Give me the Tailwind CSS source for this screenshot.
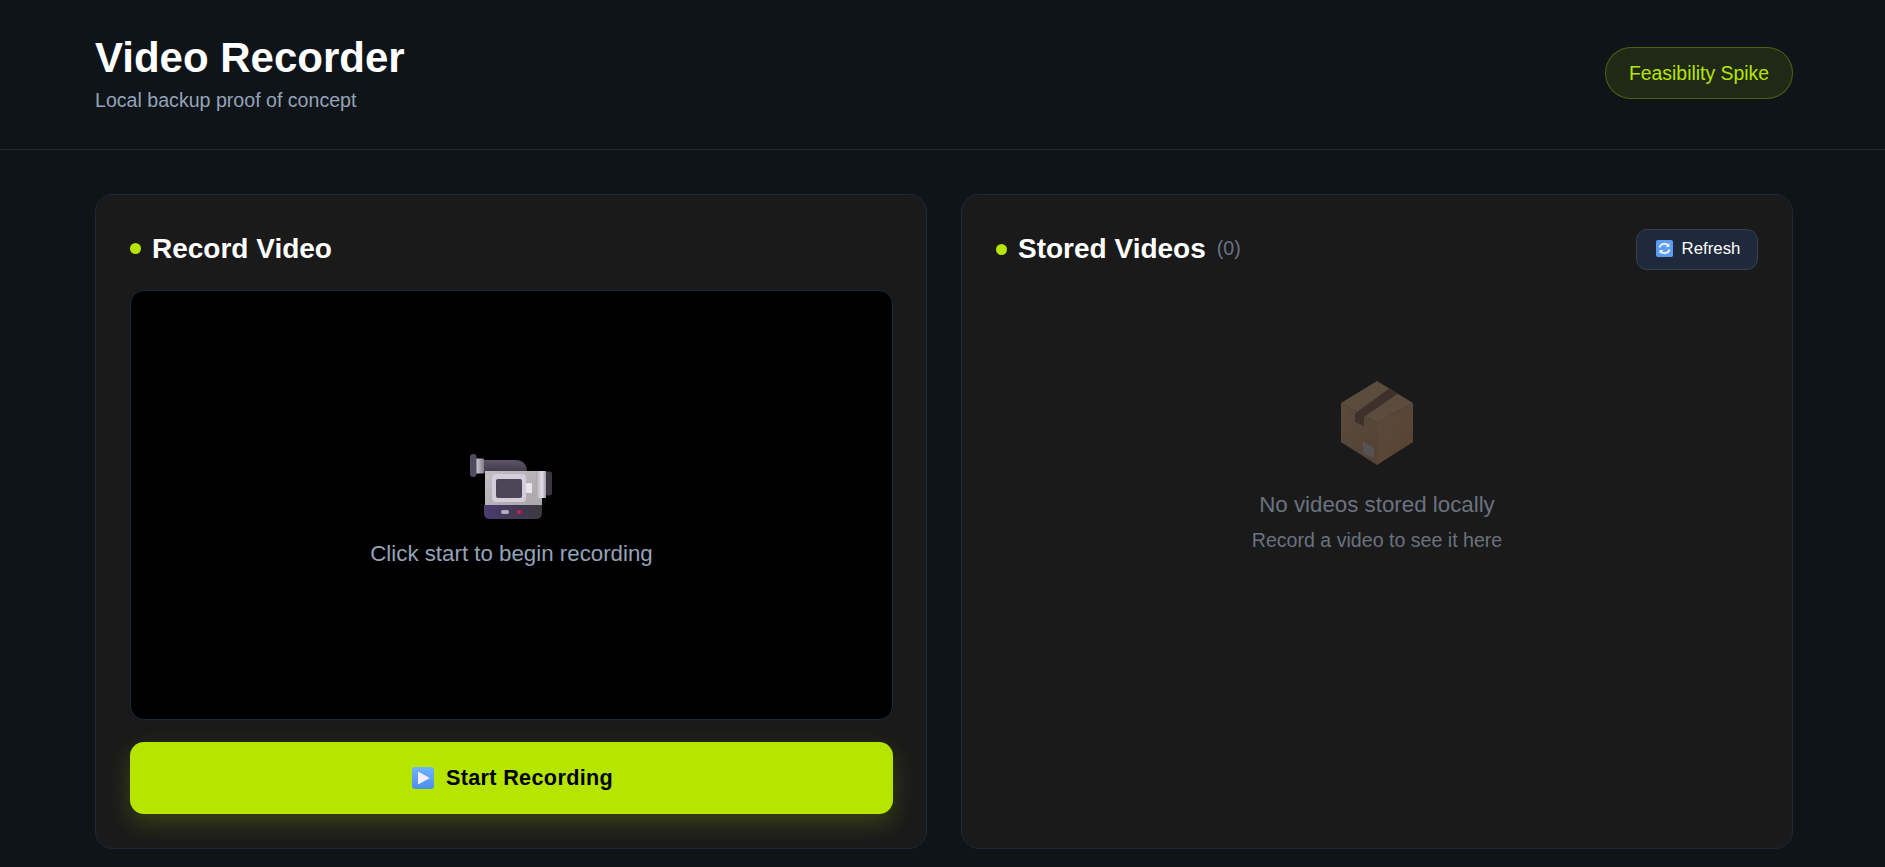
<!DOCTYPE html>
<html lang="en">
<head>
<meta charset="utf-8">
<title>Video Recorder</title>
<script src="https://cdn.jsdelivr.net/npm/@tailwindcss/browser@4"></script>
</head>
<body class="bg-[#0f1419] font-['Liberation_Sans',Arial,sans-serif] text-white h-[867px] overflow-hidden">
<header class="h-[150px] border-b border-[#1e293b] pl-[95px] pr-[92px] flex items-center justify-between">
  <div class="-mt-[3px]">
    <h1 class="text-[42px] leading-[48px] font-bold">Video Recorder</h1>
    <p class="text-[19.6px] leading-[24px] mt-[6px] text-[#94a3b8]">Local backup proof of concept</p>
  </div>
  <span class="-mt-[3px] w-[188px] h-[52px] pt-[2px] rounded-full border border-[#b8e6004d] bg-[#b8e6001a] text-[#b6e600] text-[19.4px] flex items-center justify-center">Feasibility Spike</span>
</header>
<main class="pl-[95px] pr-[92px] pt-[44px] grid grid-cols-2 gap-[34px]">
  <section class="h-[655px] bg-[#1a1a1a] border border-[#1e293b] rounded-[18px] p-[34px] flex flex-col">
    <div class="h-[41px] pb-[2px] flex items-center gap-[11px]">
      <span class="w-[11px] h-[11px] rounded-full bg-[#b6e600]"></span>
      <h2 class="text-[28px] font-bold leading-none">Record Video</h2>
    </div>
    <div class="mt-[20px] -mr-[1px] h-[430px] bg-black border border-[#1e293b] rounded-[14px] flex flex-col items-center pt-[163px]">
      <svg class="w-[84px] h-[67px]" viewBox="0 0 84 67" fill="none">
        <defs>
          <linearGradient id="cam-body" x1="0" y1="0" x2="1" y2="1"><stop offset="0" stop-color="#c2bec5"/><stop offset="1" stop-color="#a9a6a9"/></linearGradient>
          <linearGradient id="cam-base" x1="0" y1="0" x2="1" y2="0"><stop offset="0" stop-color="#4d3a70"/><stop offset="1" stop-color="#3a393e"/></linearGradient>
          <linearGradient id="cam-top" x1="0" y1="0" x2="0" y2="1"><stop offset="0" stop-color="#5c5468"/><stop offset="1" stop-color="#3e3848"/></linearGradient>
          <linearGradient id="cam-ring" x1="0" y1="0" x2="1" y2="0"><stop offset="0" stop-color="#dcd9e0"/><stop offset="1" stop-color="#7f7b88"/></linearGradient>
          <linearGradient id="cam-lens" x1="0" y1="0" x2="1" y2="0"><stop offset="0" stop-color="#a9a6a9"/><stop offset="0.6" stop-color="#e4e1ea"/><stop offset="1" stop-color="#9b96a4"/></linearGradient>
        </defs>
        <path d="M13 6h32q12 0 12 12v1H13z" fill="url(#cam-top)"/>
        <rect x="5" y="4.500" width="9" height="15" rx="1" fill="url(#cam-ring)"/>
        <rect x="0" y="0" width="6.500" height="23" rx="3.200" fill="#524a5e"/>
        <rect x="75" y="17.500" width="7" height="24" rx="2" fill="#3a3642"/>
        <path d="M66 17h10v27H66z" fill="url(#cam-lens)"/>
        <path d="M15 17h51v27h6v8H15z" fill="url(#cam-body)"/>
        <rect x="22" y="20" width="34" height="28" rx="4" fill="#d2cedb"/>
        <rect x="26" y="25" width="26" height="19" rx="2" fill="#4c4658"/>
        <rect x="56" y="29" width="6" height="10" rx="1" fill="#e8e5ee"/>
        <path d="M14 51h58v8q0 6-6 6H20q-6 0-6-6z" fill="url(#cam-base)"/>
        <rect x="31" y="56" width="8" height="4" rx="2" fill="#b3aebb"/>
        <circle cx="49" cy="58" r="2" fill="#e8174f"/>
      </svg>
      <p class="mt-[20px] text-[22.3px] leading-[26px] text-[#94a3b8]">Click start to begin recording</p>
    </div>
    <button class="mt-[22px] -mr-[1px] pl-[2px] h-[72px] rounded-[14px] bg-[#b6e600] text-black shadow-[0_9px_24px_rgba(184,230,0,0.2)] flex items-center justify-center gap-[12px] font-bold text-[21.6px] tracking-[0.35px]">
      <svg class="w-[22px] h-[22px]" viewBox="0 0 22 22">
        <defs><linearGradient id="play-bg" x1="0" y1="0" x2="0" y2="1"><stop offset="0" stop-color="#6fb4fc"/><stop offset="1" stop-color="#4a8fe8"/></linearGradient></defs>
        <rect width="22" height="22" rx="3" fill="url(#play-bg)"/>
        <path d="M6 4.500v13L18 11z" fill="#f0edff"/>
      </svg>
      <span>Start Recording</span>
    </button>
  </section>
  <section class="h-[655px] bg-[#1a1a1a] border border-[#1e293b] rounded-[18px] p-[34px] flex flex-col">
    <div class="h-[41px] flex items-center">
      <span class="w-[11px] h-[11px] -mt-[1px] rounded-full bg-[#b6e600]"></span>
      <h2 class="ml-[11px] -mt-[2px] text-[28px] font-bold leading-none">Stored Videos</h2>
      <span class="ml-[11px] -mt-[1px] text-[19.6px] text-[#6b7280]">(0)</span>
      <button class="ml-auto w-[122px] h-[41px] pl-[2px] pb-[2px] rounded-[11px] bg-[#1e293b] border border-[#334155] text-white text-[16.8px] flex items-center justify-center gap-[9px]">
        <svg class="w-[17px] h-[17px]" viewBox="0 0 17 17" fill="none">
          <rect width="17" height="17" rx="2" fill="#5a9df2"/>
          <path d="M3.500 7.500a5 5 0 0 1 9-1.500M13.500 9.500a5 5 0 0 1-9 1.500" stroke="#eef2ff" stroke-width="1.800"/>
          <path d="M13.500 3v4h-4zM3.500 14v-4h4z" fill="#eef2ff"/>
        </svg>
        <span>Refresh</span>
      </button>
    </div>
    <div class="flex flex-col items-center pt-[111px]">
      <svg class="w-[72px] h-[84px] opacity-50" viewBox="0 0 72 84" fill="none">
        <defs>
          <linearGradient id="box-r" x1="0" y1="0" x2="1" y2="1"><stop offset="0" stop-color="#9a7c60"/><stop offset="1" stop-color="#966a46"/></linearGradient>
          <linearGradient id="box-l" x1="0" y1="0" x2="1" y2="1"><stop offset="0" stop-color="#9c7c5e"/><stop offset="1" stop-color="#8c6b4e"/></linearGradient>
        </defs>
        <path d="M36 0l36 22L36 42 0 22z" fill="#9e7f60"/>
        <path d="M0 22l36 20v42L0 61z" fill="url(#box-l)"/>
        <path d="M36 42l36-20v39L36 84z" fill="url(#box-r)"/>
        <path d="M48 7.600l9 5L23 36v9l-9-4V32.600z" fill="#63483c"/>
        <path d="M22 61l11 6v10l-11-4.500z" fill="#8f8e94"/>
      </svg>
      <p class="mt-[27px] text-[22.3px] leading-[26px] text-[#6b7280]">No videos stored locally</p>
      <p class="mt-[10px] text-[19.6px] leading-[24px] text-[#6b7280]">Record a video to see it here</p>
    </div>
  </section>
</main>
</body>
</html>
